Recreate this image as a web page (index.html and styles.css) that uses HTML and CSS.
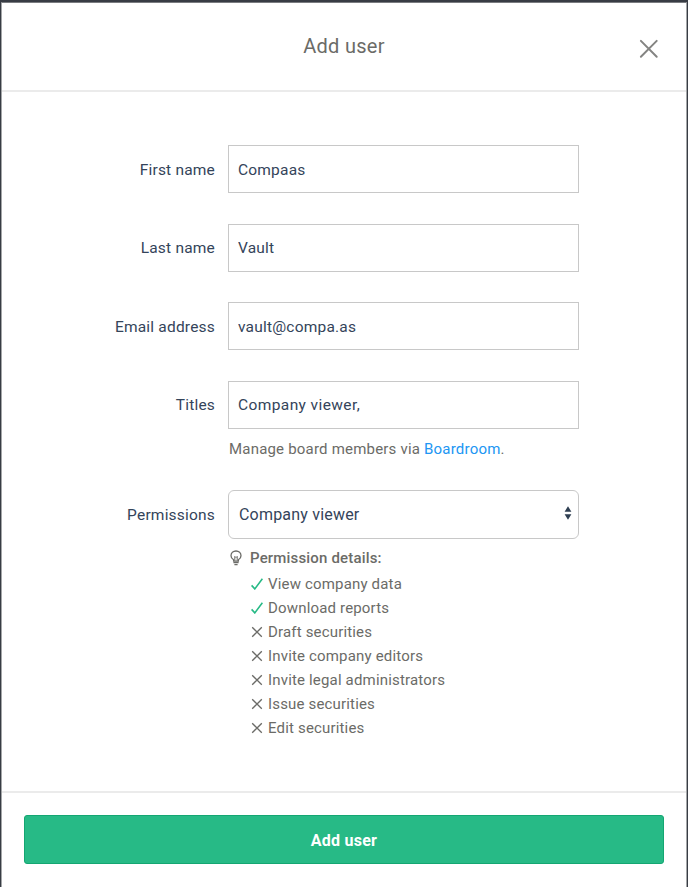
FILE: index.html
```
<!DOCTYPE html>
<html lang="en">
<head>
    <meta charset="UTF-8">
    <meta name="viewport" content="width=device-width, initial-scale=1.0">
    <title>Add user</title>
    <link rel="stylesheet" href="styles.css">
</head>
<body>

    <svg class="sprite" xmlns="http://www.w3.org/2000/svg">
        <symbol id="check" viewBox="0 0 12 12">
            <path d="M0.6 7.4 L3.8 10.9 L11.4 0.8" fill="none" stroke="#27ba86" stroke-width="1.6"/>
        </symbol>
        <symbol id="cross" viewBox="0 0 12 12">
            <path d="M1.2 1.2 L10.8 10.8 M10.8 1.2 L1.2 10.8" fill="none" stroke="#6b6b67" stroke-width="1.3"/>
        </symbol>
    </svg>

    <div class="modal">
        <header>
            <h1>Add user</h1>
            <button class="close" aria-label="Close">
                <svg width="20" height="20" viewBox="0 0 20 20">
                    <path d="M1.9 1.9 L17.7 17.7 M17.7 1.9 L1.9 17.7" fill="none" stroke="#848482" stroke-width="2" stroke-linecap="round"/>
                </svg>
            </button>
        </header>

        <form id="userForm">
            <div class="field">
                <label for="firstName">First name</label>
                <input type="text" id="firstName" value="Compaas">
            </div>
            <div class="field">
                <label for="lastName">Last name</label>
                <input type="text" id="lastName" value="Vault">
            </div>
            <div class="field">
                <label for="email">Email address</label>
                <input type="text" id="email" value="vault@compa.as">
            </div>
            <div class="field">
                <label for="titles">Titles</label>
                <input type="text" id="titles" value="Company viewer,">
                <p class="hint">Manage board members via <a href="#">Boardroom</a>.</p>
            </div>
            <div class="field permissions">
                <label for="role">Permissions</label>
                <div class="select">
                    <select id="role">
                        <option>Company viewer</option>
                    </select>
                    <svg class="arrows" width="8" height="14" viewBox="0 0 8 14">
                        <path d="M4 0.2 L7.4 5.7 H0.6 Z M4 13.8 L0.6 8.3 H7.4 Z" fill="#2f3f52"/>
                    </svg>
                </div>
                <div class="details">
                    <h2>
                        <svg width="12" height="16" viewBox="0 0 12 16" fill="none" stroke="#6b6b67" stroke-width="1.3">
                            <path d="M3.6 11.2 V9.8 C2 8.8 1 7.5 1 5.7 C1 3 3.2 1 6 1 C8.8 1 11 3 11 5.7 C11 7.5 10 8.8 8.4 9.8 V11.2 Z"/>
                            <path d="M4.8 10.8 V6.4 L6 7.6 L7.2 6.4 V10.8" stroke-width="1"/>
                            <path d="M3.4 12.7 H8.6 M4.4 14.6 H7.6"/>
                        </svg>
                        Permission details:
                    </h2>
                    <ul>
                        <li><svg><use href="#check"/></svg>View company data</li>
                        <li><svg><use href="#check"/></svg>Download reports</li>
                        <li><svg><use href="#cross"/></svg>Draft securities</li>
                        <li><svg><use href="#cross"/></svg>Invite company editors</li>
                        <li><svg><use href="#cross"/></svg>Invite legal administrators</li>
                        <li><svg><use href="#cross"/></svg>Issue securities</li>
                        <li><svg><use href="#cross"/></svg>Edit securities</li>
                    </ul>
                </div>
            </div>
        </form>

        <footer>
            <button class="submit" type="submit" form="userForm">Add user</button>
        </footer>
    </div>

</body>
</html>
```

FILE: styles.css
```
* {
    box-sizing: border-box;
}

body {
    font-family: Roboto, sans-serif;
    font-size: 15.5px;
    letter-spacing: 0.2px;
    margin: 0;
    height: 887px;
    padding: 2px 1px 0;
    background-color: #383c44;
    color: #34445a;
    overflow: hidden;
}

.sprite {
    display: none;
}

.modal {
    height: 885px;
    display: flex;
    flex-direction: column;
    background-color: white;
    border: 1px solid #a4a6a8;
    border-top-color: #7a7c80;
    border-bottom: none;
}

header {
    height: 89px;
    display: grid;
    grid-template-columns: 60px 1fr 60px;
    align-items: center;
    border-bottom: 2px solid #ebebeb;
}

header h1 {
    grid-column: 2;
    margin: 0 0 2px;
    font-size: 20px;
    font-weight: normal;
    letter-spacing: 0.3px;
    text-align: center;
    color: #6b6b67;
}

.close {
    display: flex;
    width: 20px;
    height: 20px;
    margin: 4px 0 0 13px;
    padding: 0;
    background: none;
    border: none;
    cursor: pointer;
}

form {
    flex: 1;
    padding: 53px 107px 0 0;
}

.field {
    display: grid;
    grid-template-columns: 213px 351px;
    column-gap: 13px;
    align-items: center;
    margin-bottom: 30.5px;
}

.field label {
    padding-top: 1px;
    text-align: right;
}

.field input,
.field select {
    width: 100%;
    height: 48px;
    padding: 1px 9px 0;
    border: 1px solid #c8c8c8;
    border-radius: 0;
    outline: none;
    background-color: white;
    font: inherit;
    letter-spacing: inherit;
    color: inherit;
}

#titles {
    letter-spacing: 0.4px;
}

.hint {
    grid-column: 2;
    margin: 11px 0 0;
    padding-left: 1px;
    font-size: 15px;
    line-height: 18px;
    color: #6b6b67;
}

.hint a {
    color: #2196f3;
    text-decoration: none;
}

.permissions {
    padding-top: 2px;
}

.select {
    position: relative;
}

.field select {
    display: block;
    height: 49px;
    padding: 0 10px;
    border-radius: 6px;
    font-size: 16px;
    appearance: none;
}

.arrows {
    position: absolute;
    top: 16px;
    right: 7px;
    pointer-events: none;
}

.details {
    grid-column: 2;
    font-size: 15px;
    letter-spacing: 0.17px;
    color: #6b6b67;
}

.details h2 {
    display: flex;
    align-items: center;
    gap: 8px;
    margin: 9px 0 4px;
    padding-left: 2px;
    font-size: 15px;
    font-weight: 500;
    line-height: 20px;
}

.details ul {
    list-style-type: none;
    margin: 0;
    padding: 0 0 0 23px;
}

.details li {
    display: flex;
    align-items: center;
    gap: 5px;
    height: 24px;
}

.details li svg {
    width: 12px;
    height: 12px;
}

footer {
    height: 96px;
    padding: 22px 22px 0;
    border-top: 2px solid #ebebeb;
}

.submit {
    display: block;
    width: 100%;
    height: 49px;
    padding-top: 2px;
    background-color: #27ba86;
    color: white;
    border: 1px solid #14a672;
    border-radius: 3px;
    font: inherit;
    font-size: 16px;
    font-weight: bold;
    letter-spacing: 0.25px;
    cursor: pointer;
}
```
